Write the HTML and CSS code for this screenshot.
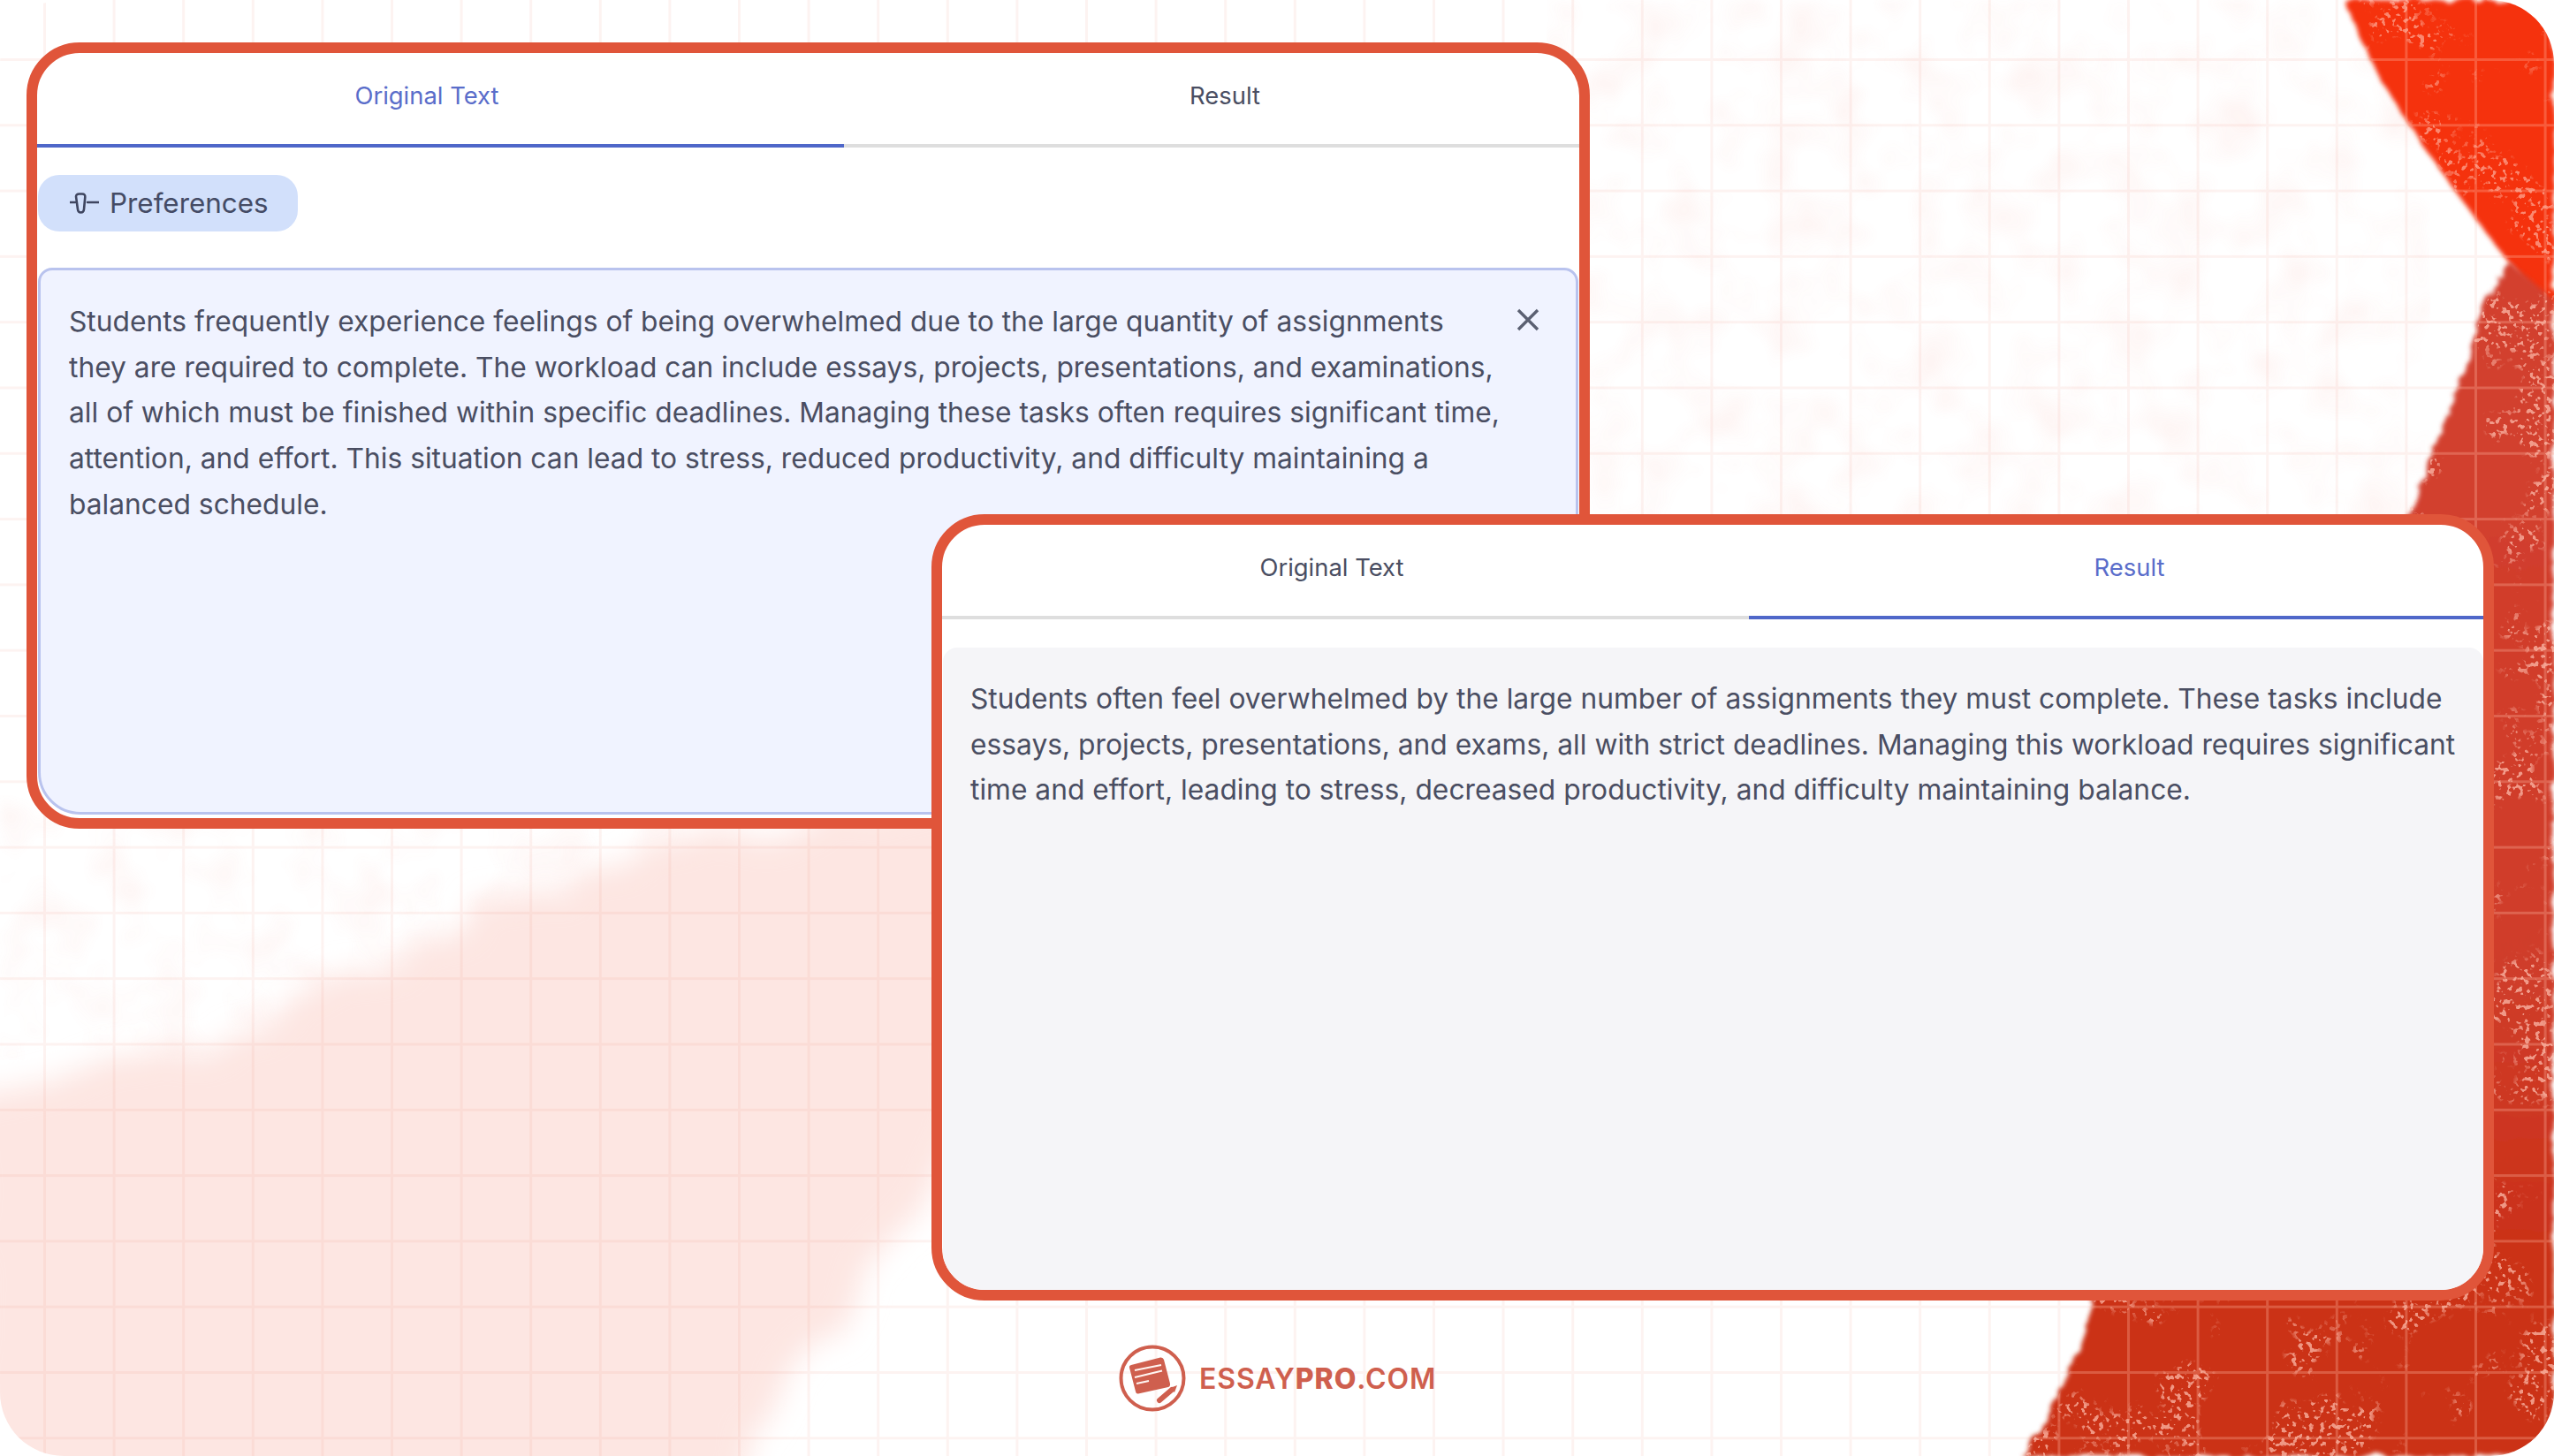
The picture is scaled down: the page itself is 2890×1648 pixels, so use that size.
FILE: index.html
```html
<!DOCTYPE html>
<html lang="en">
<head>
    <meta charset="UTF-8">
    <meta name="viewport" content="width=device-width, initial-scale=1.0">
    <title>EssayPro - Original Text and Result</title>
    <link rel="stylesheet" href="styles.css">
</head>
<body>
    <main class="stage">
        <!-- paper background: pink wash, two red brush strokes, grid -->
        <svg class="paper" viewBox="0 0 2890 1648" aria-hidden="true">
            <defs>
                <pattern id="gridFaint" width="78.6" height="74.3" x="49" y="66" patternUnits="userSpaceOnUse">
                    <path d="M1.5 0V74.3M0 1.5H78.6" fill="none" stroke="#e15a3c" stroke-opacity=".07" stroke-width="3"/>
                </pattern>
                <pattern id="gridRed" width="78.6" height="74.3" x="49" y="66" patternUnits="userSpaceOnUse">
                    <path d="M1.5 0V74.3M0 1.5H78.6" fill="none" stroke="#ffb9a6" stroke-opacity=".3" stroke-width="3"/>
                </pattern>
                <filter id="rough" x="-5%" y="-5%" width="110%" height="110%">
                    <feTurbulence type="fractalNoise" baseFrequency=".05" numOctaves="3" seed="4"/>
                    <feDisplacementMap in="SourceGraphic" scale="14"/>
                    <feGaussianBlur stdDeviation="2.5"/>
                </filter>
                <filter id="soft" x="-5%" y="-5%" width="110%" height="110%">
                    <feTurbulence type="fractalNoise" baseFrequency=".012" numOctaves="4" seed="9"/>
                    <feDisplacementMap in="SourceGraphic" scale="50"/>
                    <feGaussianBlur stdDeviation="16"/>
                </filter>
                <!-- small spots, only inside larger patches -->
                <filter id="speckle" x="0" y="0" width="100%" height="100%" color-interpolation-filters="sRGB">
                    <feTurbulence type="fractalNoise" baseFrequency=".16" numOctaves="2" seed="21"/>
                    <feColorMatrix values="0 0 0 0 1  0 0 0 0 .76  0 0 0 0 .7  14 0 0 0 -8" result="spots"/>
                    <feTurbulence type="fractalNoise" baseFrequency=".012" numOctaves="3" seed="6"/>
                    <feColorMatrix values="0 0 0 0 1  0 0 0 0 1  0 0 0 0 1  9 0 0 0 -4.6" result="patches"/>
                    <feComposite in="spots" in2="patches" operator="in"/>
                </filter>
                <filter id="blotch" x="0" y="0" width="100%" height="100%" color-interpolation-filters="sRGB">
                    <feTurbulence type="fractalNoise" baseFrequency=".018" numOctaves="4" seed="13"/>
                    <feColorMatrix values="0 0 0 0 .95  0 0 0 0 .45  0 0 0 0 .38  2.500 0 0 0 -1.100"/>
                    <feGaussianBlur stdDeviation="5"/>
                </filter>
                <clipPath id="strokeTop">
                    <path d="M2652 0C2668 36 2690 86 2714 122C2748 176 2786 228 2827 281C2846 306 2870 338 2890 357V0Z"/>
                </clipPath>
                <clipPath id="strokeBand">
                    <path d="M2840 296C2822 320 2812 345 2804 367C2796 398 2790 420 2763 485C2752 512 2744 540 2733 561L2369 1473C2354 1530 2330 1590 2288 1648H2890V340Z"/>
                </clipPath>
                <linearGradient id="bandFade" x1="0" y1="300" x2="0" y2="1400" gradientUnits="userSpaceOnUse">
                    <stop offset="0" stop-color="#d3402f"/>
                    <stop offset=".75" stop-color="#cf3c29"/>
                    <stop offset="1" stop-color="#cb3119"/>
                </linearGradient>
            </defs>

            <rect width="2890" height="1648" fill="#ffffff"/>
            <rect x="1750" y="0" width="1000" height="1100" filter="url(#blotch)" opacity=".065"/>
            <rect x="0" y="900" width="800" height="300" filter="url(#blotch)" opacity=".06"/>
            <path d="M1100 900C900 940 720 950 596 1015C500 1060 440 1098 295 1160C200 1195 90 1205 -40 1240V1700H830C870 1620 950 1480 1053 1330C1090 1270 1130 1180 1100 900Z" fill="#fde6e2" filter="url(#soft)"/>
            <rect width="2890" height="1648" fill="url(#gridFaint)"/>

            <g filter="url(#rough)">
                <path d="M2652 0C2668 36 2690 86 2714 122C2748 176 2786 228 2827 281C2846 306 2870 338 2890 357V0Z" fill="#f53011"/>
            </g>
            <g clip-path="url(#strokeTop)">
                <rect x="2640" width="250" height="360" filter="url(#speckle)" opacity=".6"/>
                <rect x="2640" width="250" height="360" fill="url(#gridRed)"/>
            </g>
            <g filter="url(#rough)">
                <path d="M2840 296C2822 320 2812 345 2804 367C2796 398 2790 420 2763 485C2752 512 2744 540 2733 561L2369 1473C2354 1530 2330 1590 2288 1648H2890V340Z" fill="url(#bandFade)"/>
            </g>
            <g clip-path="url(#strokeBand)">
                <rect x="2280" y="290" width="610" height="1358" filter="url(#speckle)" opacity=".7"/>
                <rect x="2280" y="290" width="610" height="1358" fill="url(#gridRed)"/>
            </g>
        </svg>

        <section class="card card-original">
            <div class="tabs">
                <a class="tab tab-first active">Original Text</a>
                <a class="tab tab-second">Result</a>
            </div>
            <div class="pref-row">
                <button class="pref-btn">
                    <svg class="pref-icon" viewBox="0 0 33 24" aria-hidden="true">
                        <path d="M0 11H6M20 11H33" fill="none" stroke="#3f4660" stroke-width="2.6" stroke-linecap="round"/>
                        <path d="M7 4.5C7 2.5 8.5 1.5 10.5 1.5H14C16.5 1.5 17.5 3 17.3 5L16 19C15.800 21.500 14.500 22.500 12.500 22.500C10.500 22.500 9.200 21.500 9 19Z" fill="none" stroke="#3f4660" stroke-width="2.6"/>
                    </svg>
                    Preferences
                </button>
            </div>
            <div class="text-box text-box-input">
                <p class="body-text">Students frequently experience feelings of being overwhelmed due to the large quantity of assignments they are required to complete. The workload can include essays, projects, presentations, and examinations, all of which must be finished within specific deadlines. Managing these tasks often requires significant time, attention, and effort. This situation can lead to stress, reduced productivity, and difficulty maintaining a balanced schedule.</p>
                <svg class="close-icon" viewBox="0 0 26 26" aria-hidden="true">
                    <path d="M2 2L24 24M24 2L2 24" fill="none" stroke="#5b6072" stroke-width="3.4"/>
                </svg>
            </div>
        </section>

        <section class="card card-result">
            <div class="tabs">
                <a class="tab tab-first">Original Text</a>
                <a class="tab tab-second active">Result</a>
            </div>
            <div class="text-box text-box-result">
                <p class="body-text">Students often feel overwhelmed by the large number of assignments they must complete. These tasks include essays, projects, presentations, and exams, all with strict deadlines. Managing this workload requires significant time and effort, leading to stress, decreased productivity, and difficulty maintaining balance.</p>
            </div>
        </section>

        <footer class="brand">
            <svg class="brand-mark" viewBox="0 0 76 76" aria-hidden="true">
                <circle cx="38" cy="38" r="35.500" fill="none" stroke="#cf5f4e" stroke-width="4"/>
                <path d="M14 23L47 14.500Q50 14 51 17L58 44Q58.500 47 56 48L22 55.500Q19.500 56 19 53L12 26Q11.500 23.500 14 23Z" fill="#cf5f4e"/>
                <path d="M18 29L48 23M18 37L49 29.500M20 44L34 41" fill="none" stroke="#fff6f3" stroke-width="2"/>
                <path d="M46 63L60 51" fill="none" stroke="#cf5f4e" stroke-width="6" stroke-linecap="round"/>
                <path d="M58 49L66 46L63 54Z" fill="#cf5f4e"/>
            </svg>
            <span class="brand-name">ESSAY<b>PRO</b>.COM</span>
        </footer>
    </main>
</body>
</html>
```

FILE: styles.css
```css
* {
    box-sizing: border-box;
}

html, body {
    margin: 0;
    padding: 0;
    background-color: #ffffff;
}

body {
    font-family: Inter, "Liberation Sans", sans-serif;
    color: #4a4e62;
}

.stage {
    position: relative;
    width: 2890px;
    height: 1648px;
    overflow: hidden;
    border-radius: 72px;
}

.paper {
    position: absolute;
    top: 0;
    left: 0;
    width: 2890px;
    height: 1648px;
}

/* cards are free floating windows, they overlap */
.card {
    position: absolute;
    display: flex;
    flex-direction: column;
    background-color: #ffffff;
    border: 12px solid #e0553a;
    border-radius: 60px;
    overflow: hidden;
}

.card-original {
    left: 30px;
    top: 48px;
    width: 1769px;
    height: 890px;
}

.card-result {
    left: 1054px;
    top: 582px;
    width: 1768px;
    height: 890px;
}

.tabs {
    display: grid;
    grid-template-columns: 913px 1fr;
    flex: none;
    height: 107px;
}

.tab {
    display: flex;
    align-items: center;
    justify-content: center;
    padding-bottom: 8px;
    font-size: 27.4px;
    color: #4a4e62;
    border-bottom: 4px solid #dedede;
}

.tab-first {
    padding-right: 31px;
}

.tab-second {
    padding-left: 30px;
}

.tab.active {
    color: #5a6dca;
    border-bottom-color: #4f67c9;
}

.pref-row {
    display: flex;
    flex: none;
    padding: 31px 0 41px 1px;
}

.pref-btn {
    display: flex;
    align-items: center;
    gap: 12px;
    width: 294px;
    height: 64px;
    padding: 0 0 0 36px;
    font-family: inherit;
    font-size: 31.4px;
    color: #444b65;
    background-color: #d2e0fb;
    border: none;
    border-radius: 24px;
}

.pref-icon {
    flex: none;
    width: 33px;
    height: 24px;
}

.text-box {
    flex: 1;
    margin-left: 1px;
}

.text-box-input {
    display: flex;
    justify-content: space-between;
    align-items: flex-start;
    margin-right: 1px;
    margin-bottom: 4px;
    padding: 32px 41px 0 32px;
    background-color: #f0f3ff;
    border: 3px solid #b9c3ee;
    border-radius: 16px 16px 48px 48px;
}

.text-box-result {
    margin-top: 32px;
    padding: 32px 16px 0 31px;
    background-color: #f5f5f8;
    border-radius: 16px 16px 0 0;
}

.body-text {
    margin: 0;
    font-size: 31.75px;
    line-height: 51.7px;
}

.text-box-input .body-text {
    width: 1622px;
}

.close-icon {
    flex: none;
    width: 26px;
    height: 26px;
    margin-top: 11px;
}

.brand {
    position: absolute;
    left: 1266px;
    top: 1522px;
    display: flex;
    align-items: center;
    gap: 15px;
}

.brand-mark {
    width: 76px;
    height: 76px;
}

.brand-name {
    font-size: 32px;
    font-weight: 600;
    letter-spacing: .9px;
    color: #cf5f4e;
}

.brand-name b {
    font-weight: 800;
}
```
